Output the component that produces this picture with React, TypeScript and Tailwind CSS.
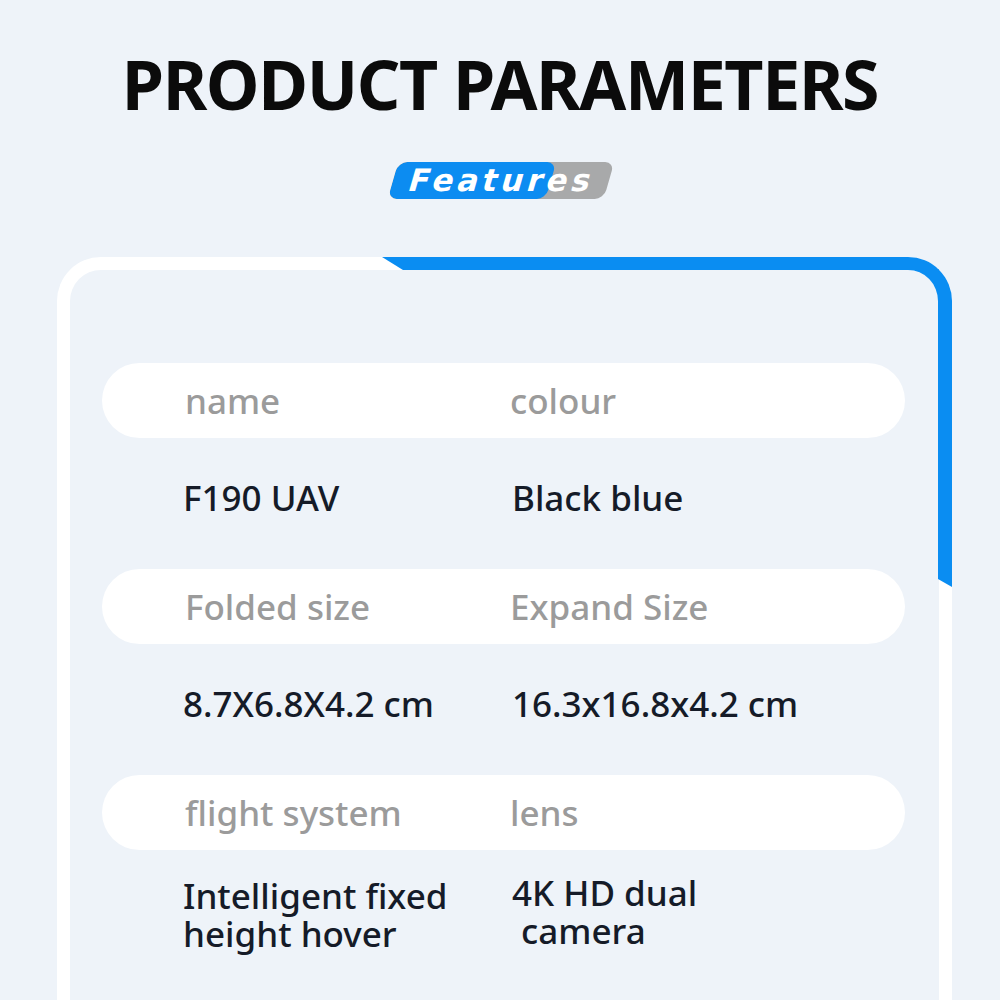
const font = "font-['Noto_Sans','Open_Sans',sans-serif]";

type Row = {
	labels: [string, string];
	values: [string, string];
};

const rows: Row[] = [
	{ labels: ["name", "colour"], values: ["F190 UAV", "Black blue"] },
	{ labels: ["Folded size", "Expand Size"], values: ["8.7X6.8X4.2 cm", "16.3x16.8x4.2 cm"] },
	{ labels: ["flight system", "lens"], values: ["Intelligent fixed\nheight hover", "4K HD dual\n camera"] },
];

function FeaturesBadge() {
	return (
		<div className="mt-[44px] flex justify-center pl-[2px]">
			<div className="relative h-[37px] w-[216px] skew-x-[-16deg] overflow-hidden rounded-[9px] bg-[#a8a9aa]">
				<div className="h-full w-[158px] rounded-[9px] bg-[#0c8cf1]" />
				<div className="absolute inset-0 flex items-center justify-center pl-[2px]">
					<span className="font-['DejaVu_Sans',sans-serif] text-[31px] leading-none font-bold tracking-[4px] text-white">
						Features
					</span>
				</div>
			</div>
		</div>
	);
}

function ParamGroup({ row, last }: { row: Row; last: boolean }) {
	return (
		<div>
			<div className="flex h-[75px] items-center rounded-full bg-white pl-[83px]">
				<div className="w-[325px] text-[35px] leading-none font-medium text-[#9b9b9b]">{row.labels[0]}</div>
				<div className="text-[35px] leading-none font-medium text-[#9b9b9b]">{row.labels[1]}</div>
			</div>
			<div className={`flex pl-[81px] ${last ? "h-[160px] pt-[27px]" : "h-[131px] pt-[41px]"}`}>
				<div className="w-[329px] text-[35px] leading-[38px] font-medium whitespace-pre text-[#151b28]">
					{row.values[0]}
				</div>
				<div
					className={`text-[35px] leading-[38px] font-medium whitespace-pre text-[#151b28] ${last ? "-mt-[3px]" : ""}`}
				>
					{row.values[1]}
				</div>
			</div>
		</div>
	);
}

export default function App() {
	return (
		<div className={`h-[1000px] w-[1000px] overflow-hidden bg-[#eef3f9] ${font}`}>
			<h1 className="pt-[50px] text-center text-[68px] leading-none font-bold tracking-[-1.4px] text-[#0b0b0b]">
				PRODUCT PARAMETERS
			</h1>

			<FeaturesBadge />

			<div className="relative mt-[58px] ml-[57px] w-[895px] rounded-[44px] bg-white p-[13px]">
				{/* blue corner frame */}
				<div className="pointer-events-none absolute top-0 right-0 h-[330px] w-[570px] rounded-tr-[44px] border-t-[13px] border-r-[14px] border-[#0a8df2] [clip-path:polygon(0_0,100%_0,100%_100%,calc(100%_-_14px)_calc(100%_-_8px),21px_13px)]" />

				<div className="rounded-[31px] bg-[#eef3f9] pt-[93px] pr-[34px] pb-[40px] pl-[32px]">
					{rows.map((row, i) => (
						<ParamGroup key={i} row={row} last={i === rows.length - 1} />
					))}
				</div>
			</div>
		</div>
	);
}
